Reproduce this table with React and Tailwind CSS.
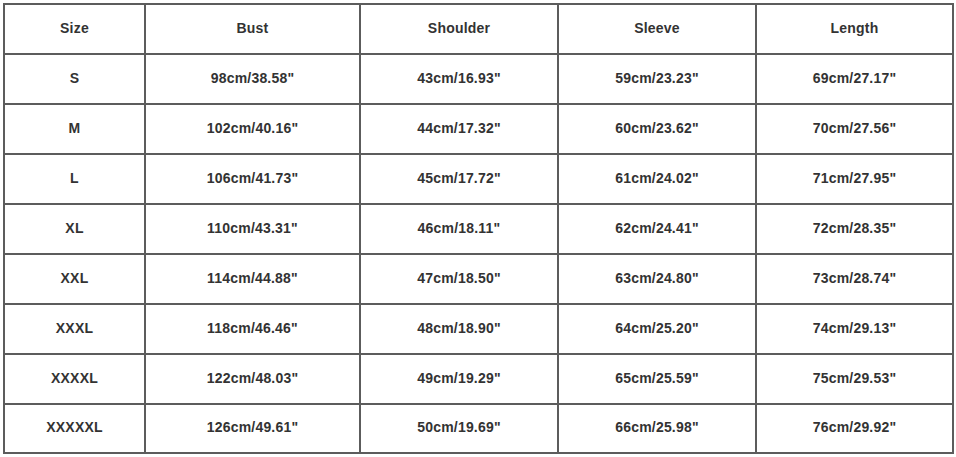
const headers = ['Size', 'Bust', 'Shoulder', 'Sleeve', 'Length']

const rows = [
  ['S', '98cm/38.58"', '43cm/16.93"', '59cm/23.23"', '69cm/27.17"'],
  ['M', '102cm/40.16"', '44cm/17.32"', '60cm/23.62"', '70cm/27.56"'],
  ['L', '106cm/41.73"', '45cm/17.72"', '61cm/24.02"', '71cm/27.95"'],
  ['XL', '110cm/43.31"', '46cm/18.11"', '62cm/24.41"', '72cm/28.35"'],
  ['XXL', '114cm/44.88"', '47cm/18.50"', '63cm/24.80"', '73cm/28.74"'],
  ['XXXL', '118cm/46.46"', '48cm/18.90"', '64cm/25.20"', '74cm/29.13"'],
  ['XXXXL', '122cm/48.03"', '49cm/19.29"', '65cm/25.59"', '75cm/29.53"'],
  ['XXXXXL', '126cm/49.61"', '50cm/19.69"', '66cm/25.98"', '76cm/29.92"'],
]

function Cell({ children }) {
  return (
    <div className="bg-white flex items-center justify-center pb-[2px] text-[14px] font-bold text-[#333] tracking-[0.2px]">
      {children}
    </div>
  )
}

export default function App() {
  return (
    <div className="w-[956px] h-[457px] bg-white pt-[3px] pl-[3px]" style={{ fontFamily: '"Liberation Sans", Arial, sans-serif' }}>
      <div className="grid w-[951px] bg-[#5c5c5c] p-[2px] gap-[2px] grid-cols-[139px_213px_196px_196px_195px] grid-rows-[repeat(8,48px)_47px]">
        {headers.map((h) => (
          <Cell key={h}>{h}</Cell>
        ))}
        {rows.map((r) => r.map((c, i) => <Cell key={r[0] + i}>{c}</Cell>))}
      </div>
    </div>
  )
}
